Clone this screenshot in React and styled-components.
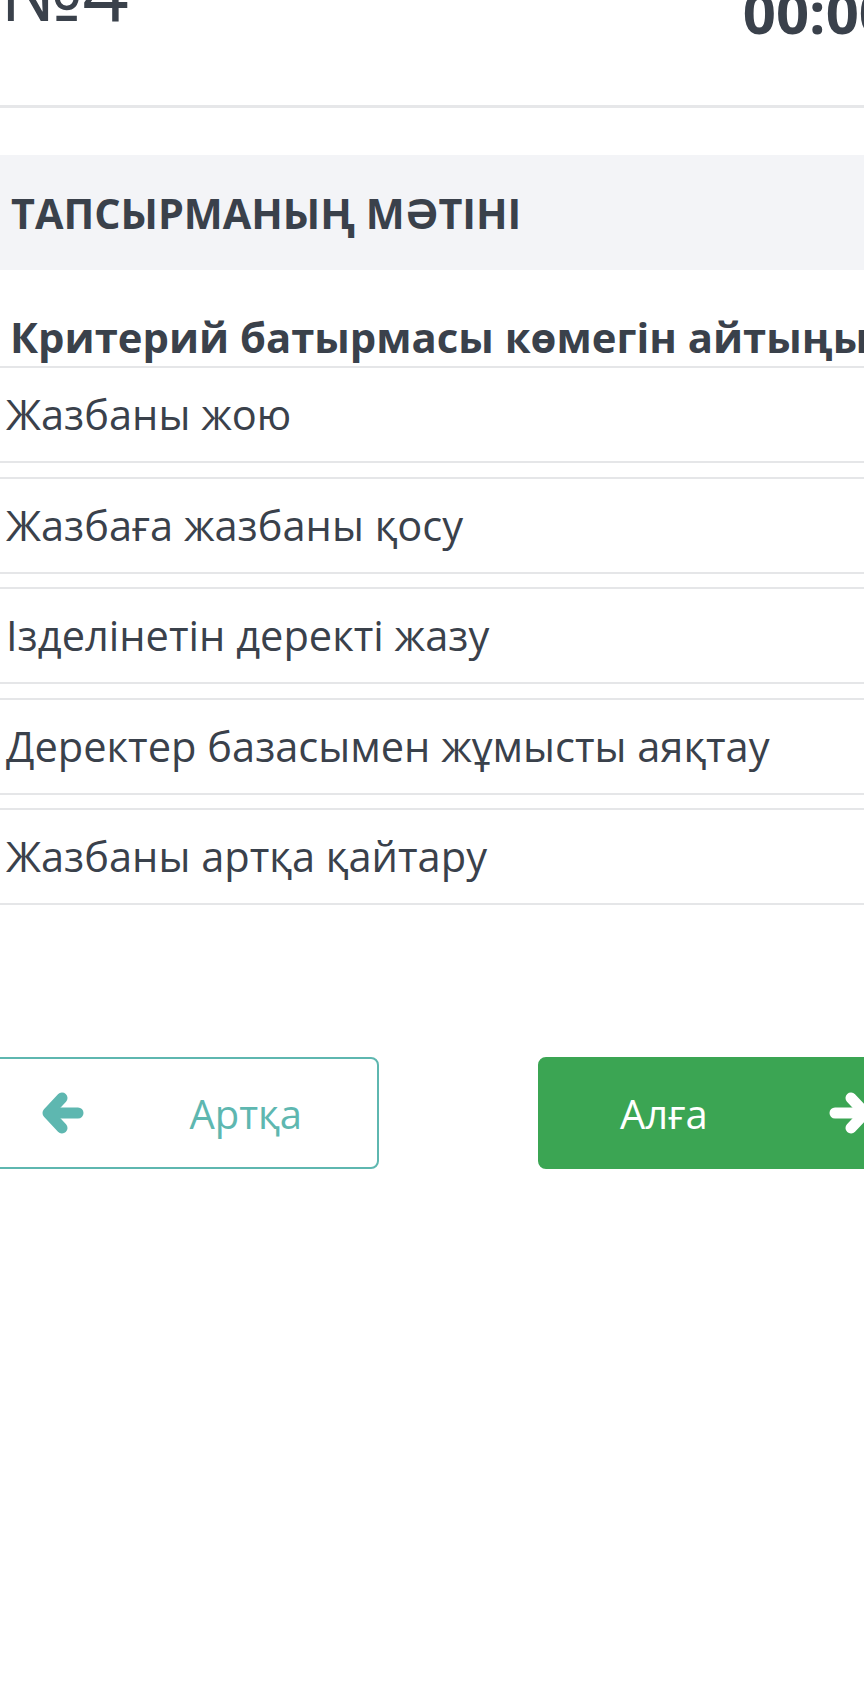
import React from 'react'
import styled, { createGlobalStyle } from 'styled-components'

const GlobalStyle = createGlobalStyle`
  html, body {
    margin: 0;
    padding: 0;
    background: #ffffff;
    overflow: hidden;
  }
  body {
    font-family: "Open Sans", "Noto Sans", sans-serif;
    color: #3a414b;
  }
`

// the screenshot is a zoomed-in crop, so the page is wider than the window
const Page = styled.div`
  width: 1000px;
  margin-top: -44px;
  margin-left: -24px;
`

const Header = styled.div`
  display: flex;
  justify-content: space-between;
  align-items: flex-start;
  box-sizing: border-box;
  height: 152px;
  padding: 0 84px 0 24px;
  border-bottom: 3px solid #e6e7e9;
`

const TaskNumber = styled.div`
  margin-top: -21px;
  font-size: 81px;
  line-height: 1.362;
`

const Timer = styled.div`
  margin-top: 16px;
  font-size: 58px;
  font-weight: 700;
  line-height: 1.362;
`

const Band = styled.div`
  display: flex;
  align-items: center;
  height: 115px;
  margin-top: 47px;
  padding-left: 35px;
  background: #f3f4f7;
  font-size: 41.3px;
  font-weight: 700;
`

const Question = styled.div`
  margin-top: 39px;
  padding: 0 0 1px 34px;
  font-size: 41.8px;
  font-weight: 700;
  line-height: 56px;
  white-space: nowrap;
`

const Options = styled.div`
  display: flex;
  flex-direction: column;
  gap: 13.5px;
`

const Option = styled.div`
  padding: 19px 0 19px 30px;
  border-top: 2px solid #e5e6e8;
  border-bottom: 2px solid #e5e6e8;
  font-size: 41.6px;
  line-height: 55px;
  white-space: nowrap;
`

const ButtonRow = styled.div`
  display: flex;
  gap: 159px;
  margin-top: 152px;
  padding-left: 3px;
`

const NavButton = styled.div`
  display: flex;
  align-items: center;
  justify-content: space-between;
  box-sizing: border-box;
  width: 400px;
  height: 112px;
  padding: ${p => (p.$primary ? '0 65px 0 80px' : '0 75px 0 61px')};
  border: 2px solid ${p => (p.$primary ? '#3ba553' : '#5eb7b0')};
  border-radius: 8px;
  background: ${p => (p.$primary ? '#3ba553' : '#ffffff')};
  color: ${p => (p.$primary ? '#ffffff' : '#5eb7b0')};
  font-size: 40px;
`

// chunky rounded arrow, pointing left unless flipped
const Arrow = ({ right }) => (
  <svg
    width="42"
    height="44"
    viewBox="0 0 42 44"
    style={right ? { transform: 'scaleX(-1)' } : undefined}
  >
    <g fill="none" stroke="currentColor" strokeWidth="11" strokeLinecap="round" strokeLinejoin="round">
      <polyline points="20,7 6,22 20,37" />
      <line x1="7" y1="22" x2="36" y2="22" />
    </g>
  </svg>
)

const options = [
  'Жазбаны жою',
  'Жазбаға жазбаны қосу',
  'Ізделінетін деректі жазу',
  'Деректер базасымен жұмысты аяқтау',
  'Жазбаны артқа қайтару',
]

export default function App() {
  return (
    <>
      <GlobalStyle />
      <Page>
        <Header>
          <TaskNumber>№4</TaskNumber>
          <Timer>00:00</Timer>
        </Header>
        <Band>ТАПСЫРМАНЫҢ МӘТІНІ</Band>
        <Question>Критерий батырмасы көмегін айтыңыз</Question>
        <Options>
          {options.map((text, i) => (
            <Option key={i}>{text}</Option>
          ))}
        </Options>
        <ButtonRow>
          <NavButton>
            <Arrow />
            <span>Артқа</span>
          </NavButton>
          <NavButton $primary>
            <span>Алға</span>
            <Arrow right />
          </NavButton>
        </ButtonRow>
      </Page>
    </>
  )
}
